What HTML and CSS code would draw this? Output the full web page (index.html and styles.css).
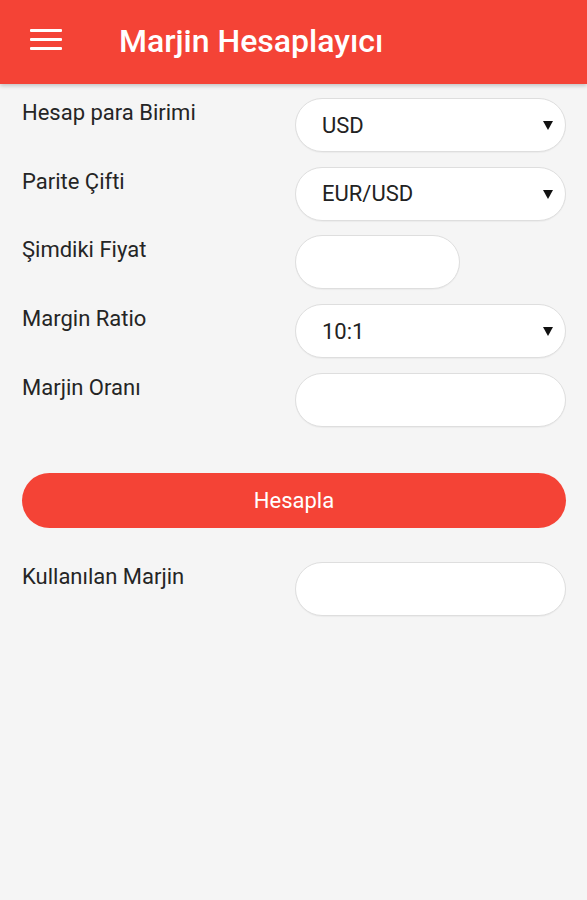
FILE: index.html
```html
<!DOCTYPE html>
<html lang="tr">
<head>
    <meta charset="UTF-8">
    <meta name="viewport" content="width=device-width, initial-scale=1.0">
    <title>Marjin Hesaplayıcı</title>
    <link rel="stylesheet" href="styles.css">
</head>
<body>
    <header class="topbar">
        <button class="menu-btn" aria-label="Menü">
            <span></span><span></span><span></span>
        </button>
        <h1>Marjin Hesaplayıcı</h1>
    </header>

    <main class="calc">
        <div class="row">
            <label for="currency">Hesap para Birimi</label>
            <div class="select-wrap">
                <select id="currency">
                    <option>USD</option>
                    <option>EUR</option>
                    <option>TRY</option>
                </select>
            </div>
        </div>

        <div class="row">
            <label for="pair">Parite Çifti</label>
            <div class="select-wrap">
                <select id="pair">
                    <option>EUR/USD</option>
                    <option>GBP/USD</option>
                    <option>USD/JPY</option>
                </select>
            </div>
        </div>

        <div class="row">
            <label for="price">Şimdiki Fiyat</label>
            <input type="text" id="price" class="field short">
        </div>

        <div class="row">
            <label for="ratio">Margin Ratio</label>
            <div class="select-wrap">
                <select id="ratio">
                    <option>10:1</option>
                    <option>50:1</option>
                    <option>100:1</option>
                </select>
            </div>
        </div>

        <div class="row">
            <label for="lot">Marjin Oranı</label>
            <input type="text" id="lot" class="field">
        </div>

        <button class="calc-btn" id="calc-btn">Hesapla</button>

        <div class="row">
            <label for="result">Kullanılan Marjin</label>
            <input type="text" id="result" class="field" readonly>
        </div>
    </main>
</body>
</html>
```

FILE: styles.css
```css
/* Marjin Hesaplayıcı */
body {
    margin: 0;
    padding: 0;
    background: #f5f5f5;
    font-family: Roboto, "Noto Sans", Arial, sans-serif;
    color: #222;
}

.topbar {
    height: 84px;
    background: #f44336;
    color: white;
    display: flex;
    align-items: center;
    box-shadow: 0 2px 4px rgba(0, 0, 0, 0.2);
}

.menu-btn {
    width: 32px;
    height: 21px;
    margin: 0 0 6px 30px;
    padding: 0;
    border: none;
    background: none;
    display: flex;
    flex-direction: column;
    justify-content: space-between;
}

.menu-btn span {
    display: block;
    height: 3px;
    background: white;
    border-radius: 1px;
}

.topbar h1 {
    margin: 0 0 2px 57px;
    font-size: 32px;
    font-weight: 500;
}

.calc {
    padding: 14px 21px 0 22px;
}

.row {
    display: grid;
    grid-template-columns: 273px 1fr;
    margin-bottom: 14.7px;
}

.row label {
    font-size: 22px;
    line-height: 26px;
    padding-top: 2px;
    color: #252525;
}

.field,
.select-wrap select {
    box-sizing: border-box;
    width: 100%;
    height: 54px;
    border: 1px solid #dedede;
    border-radius: 27px;
    background: white;
    font-family: inherit;
    font-size: 22px;
    color: #222;
    padding: 0 40px 0 26px;
    outline: none;
    box-shadow: 0 1px 1px rgba(0, 0, 0, 0.04);
}

.field.short {
    width: 165px;
}

.select-wrap {
    position: relative;
}

.select-wrap select {
    appearance: none;
    -webkit-appearance: none;
}

.select-wrap::after {
    content: "";
    position: absolute;
    right: 13px;
    top: 23px;
    border-left: 5px solid transparent;
    border-right: 5px solid transparent;
    border-top: 9px solid #111;
    pointer-events: none;
}

.calc-btn {
    display: block;
    width: 100%;
    height: 55px;
    margin: 46px 0 34px;
    border: none;
    border-radius: 28px;
    background: #f44336;
    color: white;
    font-family: inherit;
    font-size: 22px;
    cursor: pointer;
}
```
